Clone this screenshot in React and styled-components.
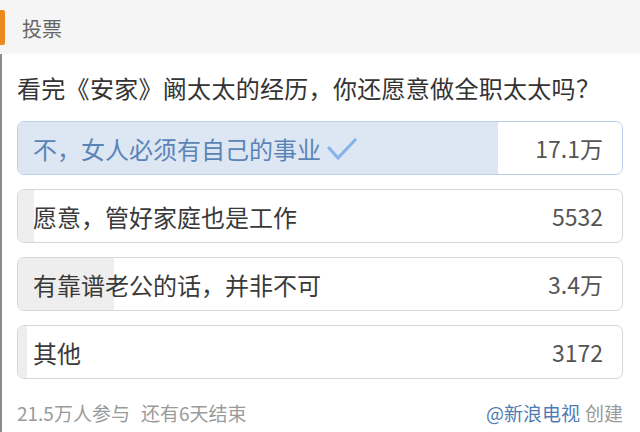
import React from "react";
import styled, { createGlobalStyle } from "styled-components";

const Global = createGlobalStyle`
  html, body { margin: 0; padding: 0; background: #fff; }
  body { font-family: "Noto Sans CJK SC", "Noto Sans", sans-serif; }
`;

const Page = styled.div`
  width: 640px;
  height: 432px;
  overflow: hidden;
  display: flex;
  flex-direction: column;
`;

const Header = styled.div`
  height: 54px;
  flex: none;
  background: #f5f5f5;
  display: flex;
  align-items: center;
  padding-top: 2px;
  border-bottom: 1px solid #fafafa;
  box-sizing: border-box;
`;

const Marker = styled.div`
  width: 5px;
  height: 35px;
  background: #ec8a1f;
  border-radius: 0 2px 2px 0;
`;

const HeaderTitle = styled.div`
  margin-left: 17px;
  padding-top: 2px;
  font-size: 20px;
  color: #666;
  line-height: 1;
`;

const Body = styled.div`
  flex: 1;
  border-left: 2px solid #8c8c8c;
  padding: 17px 17px 0 15px;
  display: flex;
  flex-direction: column;
`;

const Question = styled.div`
  font-size: 24px;
  line-height: 34px;
  letter-spacing: 0.3px;
  color: #333;
  margin-bottom: 16px;
  white-space: nowrap;
`;

const Options = styled.div`
  display: flex;
  flex-direction: column;
  gap: 14px;
`;

const Option = styled.div`
  position: relative;
  height: 54px;
  box-sizing: border-box;
  border: 1px solid ${(p) => (p.$chosen ? "#b9d0ea" : "#d6d6d6")};
  border-radius: 7px;
  overflow: hidden;
  background: #fff;
`;

const Fill = styled.div`
  position: absolute;
  left: 0;
  top: 0;
  bottom: 0;
  background: ${(p) => (p.$chosen ? "#dde7f3" : "#eeeeee")};
`;

const OptionRow = styled.div`
  position: relative;
  height: 100%;
  display: flex;
  align-items: center;
  justify-content: space-between;
  padding: 0 19px 0 15px;
`;

const Label = styled.div`
  display: flex;
  align-items: center;
  font-size: 24px;
  color: ${(p) => (p.$chosen ? "#5b84b6" : "#3a3a3a")};
  white-space: nowrap;
`;

const Count = styled.div`
  font-size: 23px;
  color: #555;
  white-space: nowrap;
`;

const Footer = styled.div`
  margin-top: 22px;
  display: flex;
  justify-content: space-between;
  align-items: center;
  font-size: 19px;
  line-height: 24px;
  color: #9a9a9a;
  white-space: nowrap;
`;

const Stats = styled.div`
  display: flex;
  gap: 11px;
`;

const Creator = styled.div`
  color: #9a9a9a;
`;

const Author = styled.span`
  color: #4f7db3;
  margin-right: 5px;
`;

const CheckIcon = styled.svg`
  margin-left: 6px;
  margin-top: 2px;
`;

const Check = () => (
  <CheckIcon width="30" height="24" viewBox="0 0 30 24">
    <polyline
      points="2,11 11,21 28,3"
      fill="none"
      stroke="#86b3ea"
      strokeWidth="3.2"
      strokeLinecap="round"
      strokeLinejoin="round"
    />
  </CheckIcon>
);

const total = 215000;
const options = [
  { label: "不，女人必须有自己的事业", count: "17.1万", value: 171000, chosen: true },
  { label: "愿意，管好家庭也是工作", count: "5532", value: 5532 },
  { label: "有靠谱老公的话，并非不可", count: "3.4万", value: 34000 },
  { label: "其他", count: "3172", value: 3172 },
];

export default function App() {
  return (
    <Page>
      <Global />
      <Header>
        <Marker />
        <HeaderTitle>投票</HeaderTitle>
      </Header>
      <Body>
        <Question>看完《安家》阚太太的经历，你还愿意做全职太太吗？</Question>
        <Options>
          {options.map((o) => (
            <Option key={o.label} $chosen={o.chosen}>
              <Fill $chosen={o.chosen} style={{ width: `${(o.value / total) * 100}%` }} />
              <OptionRow>
                <Label $chosen={o.chosen}>
                  {o.label}
                  {o.chosen && <Check />}
                </Label>
                <Count>{o.count}</Count>
              </OptionRow>
            </Option>
          ))}
        </Options>
        <Footer>
          <Stats>
            <span>21.5万人参与</span>
            <span>还有6天结束</span>
          </Stats>
          <Creator>
            <Author>@新浪电视</Author>创建
          </Creator>
        </Footer>
      </Body>
    </Page>
  );
}
